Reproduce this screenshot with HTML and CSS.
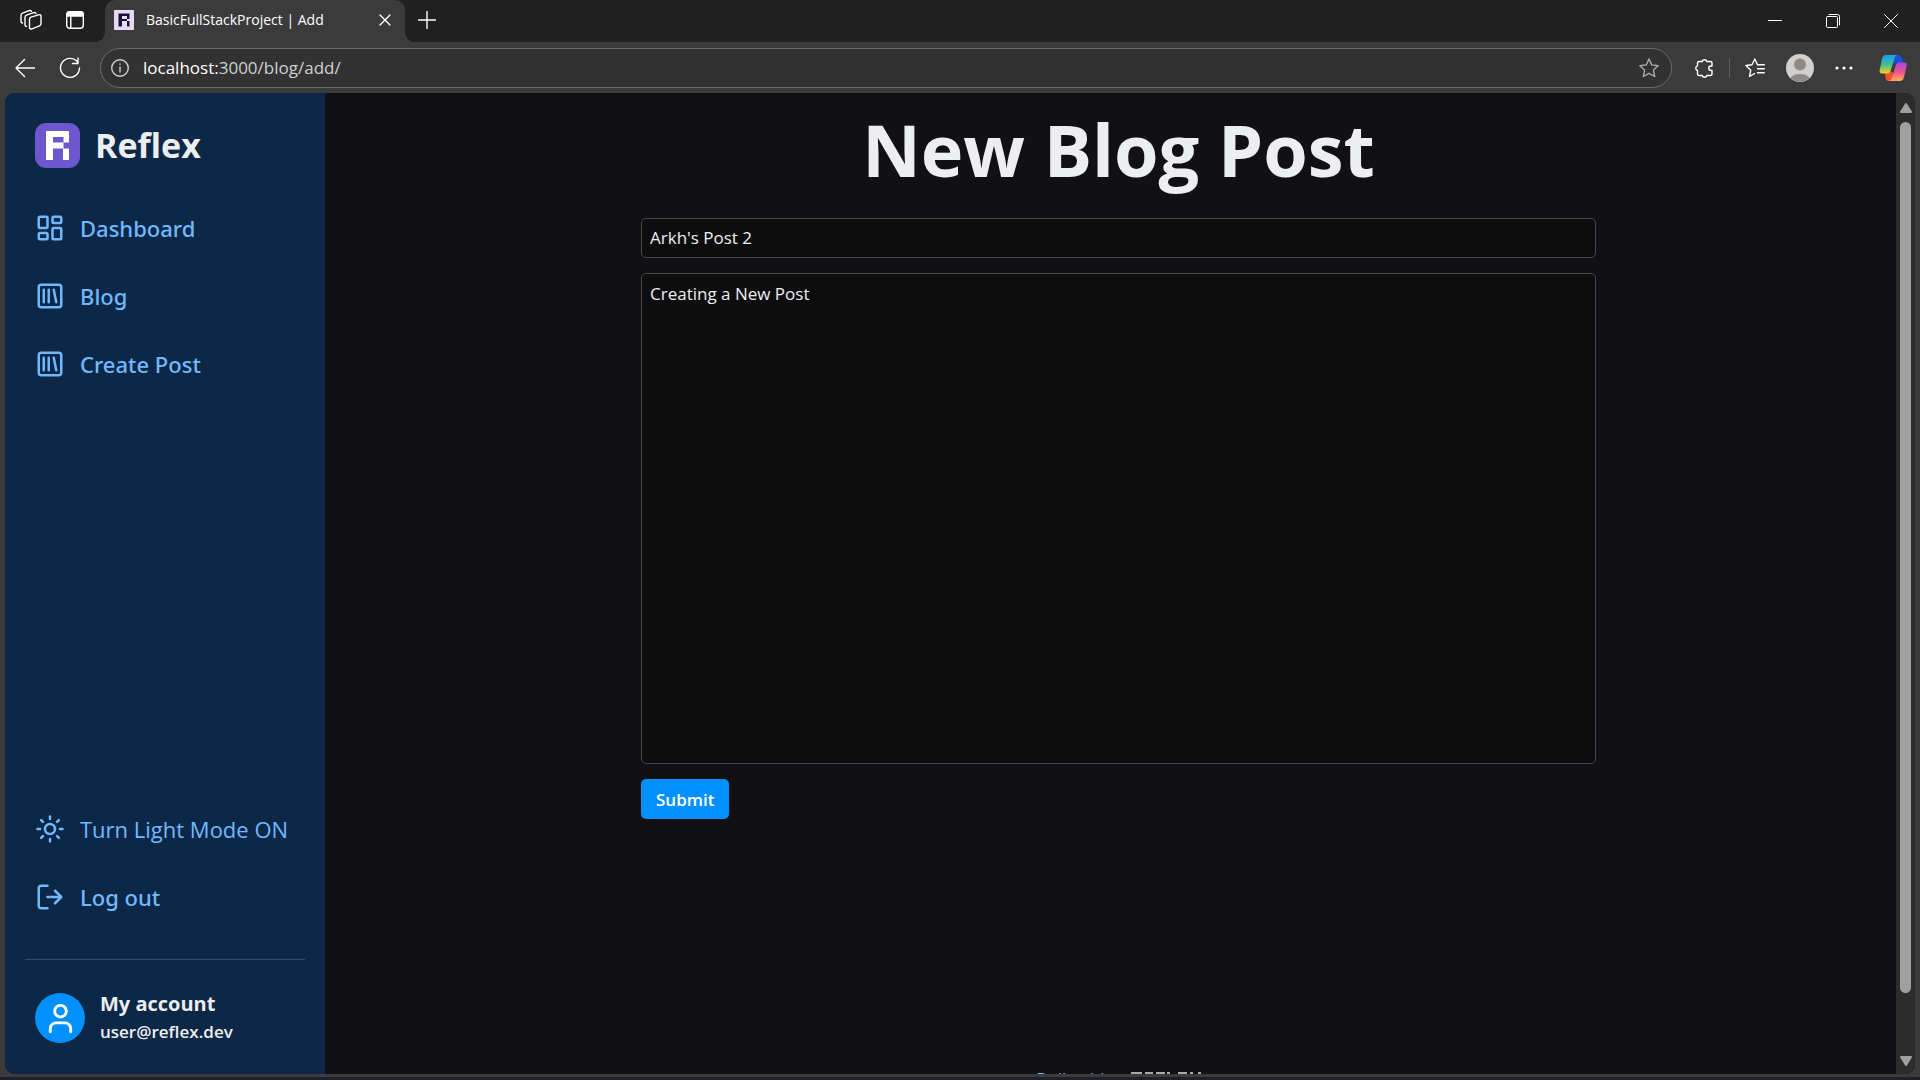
FILE: index.html
```html
<!DOCTYPE html>
<html lang="en">
<head>
<meta charset="utf-8">
<title>BasicFullStackProject | Add</title>
<link rel="stylesheet" href="styles.css">
</head>
<body>
<div class="browser">
  <header class="tabstrip">
    <div class="tab-tools">
      <button class="icon-btn" aria-label="Workspaces"><svg width="22" height="22" viewBox="0 0 22 22" class="line"><path d="M11 8.200 18.500 5.800Q21 5.200 21 7.500V14.500Q21 16.200 19.500 16.800L12 19.800Q9.500 20.500 9.500 18.300V10.200Q9.500 8.700 11 8.200z"/><path d="M6.500 17.500Q5 17.500 5 15.800V8.500Q5 6.700 6.500 6.200L13.500 3.700Q15.500 3.200 16 4.500"/><path d="M2.500 14Q1 14 1 12.300V6.500Q1 4.700 2.500 4.200L9 1.700Q10.800 1.200 11.500 2.300"/></svg></button>
      <button class="icon-btn" aria-label="Tab actions"><svg width="18" height="18" viewBox="0 0 18 18" class="line"><rect x=".7" y=".7" width="16.600" height="16.600" rx="3"/><path d="M.7 5V3.700a3 3 0 0 1 3-3h10.600a3 3 0 0 1 3 3V5z" fill="currentColor"/><path d="M4.800 5v12"/></svg></button>
    </div>
    <div class="tab">
      <svg class="favicon" width="20" height="20" viewBox="0 0 20 20"><path fill="#e4dcf5" d="M0 0h20v20H0z"/><path fill="#1c1433" fill-rule="evenodd" d="M4.500 3.500h11V9H13v2h2.500v5.500H13V11H8v5.500H4.500zM8 6v3h5V6z"/></svg>
      <span class="tab-title">BasicFullStackProject | Add</span>
      <button class="icon-btn" aria-label="Close tab"><svg width="12" height="12" viewBox="0 0 12 12" class="line"><path d="m1 1 10 10M11 1 1 11"/></svg></button>
    </div>
    <button class="icon-btn new-tab" aria-label="New tab"><svg width="18" height="18" viewBox="0 0 18 18" class="line"><path d="M9 .5v17M.5 9h17"/></svg></button>
    <div class="window-controls">
      <button class="icon-btn" aria-label="Minimize"><svg width="14" height="14" viewBox="0 0 14 14" class="line thin"><path d="M.5 6.500h13"/></svg></button>
      <button class="icon-btn" aria-label="Restore"><svg width="14" height="14" viewBox="0 0 14 14" class="line thin"><rect x=".5" y="2.500" width="11" height="11" rx="1"/><path d="M3 .5h8.500a2 2 0 0 1 2 2V11"/></svg></button>
      <button class="icon-btn" aria-label="Close window"><svg width="14" height="14" viewBox="0 0 14 14" class="line thin"><path d="m.5.5 13 13M13.500.5l-13 13"/></svg></button>
    </div>
  </header>
  <div class="toolbar">
    <div class="nav-tools">
      <button class="icon-btn" aria-label="Back"><svg width="20" height="20" viewBox="0 0 20 20" class="line"><path d="M20 10H1M9.500 1.500 1 10l8.500 8.500"/></svg></button>
      <button class="icon-btn" aria-label="Refresh"><svg width="22" height="22" viewBox="0 0 22 22" class="line"><path d="M20.500 11A9.500 9.500 0 1 1 18.500 5M19 1v5.500h-5.500"/></svg></button>
    </div>
    <div class="address">
      <svg width="18" height="18" viewBox="0 0 18 18" class="line"><circle cx="9" cy="9" r="8.300"/><path d="M9 8v5M9 5v.3"/></svg>
      <span class="url"><b>localhost:</b>3000/blog/add/</span>
      <button class="icon-btn star" aria-label="Add to favorites"><svg width="20" height="20" viewBox="0 0 20 20" class="line"><path d="m10 1 2.700 5.900 6.400.8-4.700 4.400 1.300 6.400-5.700-3.200-5.700 3.200 1.300-6.400L.9 7.700l6.400-.8z"/></svg></button>
    </div>
    <div class="actions">
      <button class="icon-btn" aria-label="Extensions"><svg width="20" height="20" viewBox="0 0 20 20" class="line"><path d="M5 3.500H8.200a2.400 2.400 0 0 1 4.600 0H16.500a1.500 1.500 0 0 1 1.500 1.500V8h-1a2.200 2.200 0 0 0 0 4.400h1V16a1.500 1.500 0 0 1-1.500 1.500H12.800a2.400 2.400 0 0 1-4.600 0H5A1.500 1.500 0 0 1 3.500 16V12.500a2.400 2.400 0 0 1 0-4.600V5A1.500 1.500 0 0 1 5 3.500z"/></svg></button>
      <span class="divider"></span>
      <button class="icon-btn" aria-label="Favorites"><svg width="20" height="20" viewBox="0 0 20 20" class="line"><path d="M9.500 15.500 4.500 18.500l1.200-6.200L1 7.500l6-.8L9.800 1l2.700 5.700H19.300M12.500 10.700h6.800M12.500 14.700h6.800"/></svg></button>
      <button class="icon-btn" aria-label="Profile"><svg width="28" height="28" viewBox="0 0 28 28"><circle cx="14" cy="14" r="14" fill="#d2d0ce"/><circle cx="14" cy="10.500" r="6" fill="#8f8b88"/><path fill="#8f8b88" d="M4.500 24a10.500 7 0 0 1 19 0 14 14 0 0 1-19 0z"/></svg></button>
      <button class="icon-btn" aria-label="Settings and more"><svg width="18" height="4" viewBox="0 0 18 4" fill="#fff"><circle cx="2" cy="2" r="1.600"/><circle cx="9" cy="2" r="1.600"/><circle cx="16" cy="2" r="1.600"/></svg></button>
      <button class="icon-btn copilot" aria-label="Copilot"><svg width="28" height="28" viewBox="0 0 28 28"><defs><linearGradient id="cool" x1="0" y1="0" x2="0" y2="1"><stop offset="0" stop-color="#1b9df0"/><stop offset=".5" stop-color="#3bbf9a"/><stop offset="1" stop-color="#f2d313"/></linearGradient><linearGradient id="warm" x1="0" y1="0" x2="0" y2="1"><stop offset="0" stop-color="#a04be0"/><stop offset=".5" stop-color="#ee5090"/><stop offset="1" stop-color="#fbb15a"/></linearGradient></defs><path fill="#1b4fd8" d="M14 1h5q3 0 4 3l1.500 5H19q-2.500 0-3.500 1L13 8z"/><path fill="#f4502c" d="M6 19h3q2 0 3-2l3 3-2 7H9.500q-2.500 0-3-3z"/><path fill="url(#cool)" d="M7 1h12q-2.500 0-3.300 3L11.500 17q-.7 2.500-3 2.500H3q-3 0-2.300-3.500L3 5q1-4 4-4z"/><path fill="url(#warm)" d="M21 27H9.500q2.500 0 3.300-3L16.500 12q.8-3.500 3.500-3.500h5q3.500 0 2.700 3.500L25 23q-1 4-4 4z"/></svg></button>
    </div>
  </div>
  <div class="viewport">
    <aside class="sidebar">
      <a class="brand" href="#"><svg width="45" height="45" viewBox="0 0 45 45"><rect width="45" height="45" rx="11" fill="#6e56cf"/><path fill="#fff" fill-rule="evenodd" d="M11 8h23v11.500h-5.500v6H34V37h-6V25.500H18V37h-7zM18 14v5.500h10.500V14z"/></svg><span>Reflex</span></a>
      <nav class="menu">
        <a href="#"><svg class="icon" viewBox="0 0 24 24"><rect width="7" height="9" x="3" y="3" rx="1"/><rect width="7" height="5" x="14" y="3" rx="1"/><rect width="7" height="9" x="14" y="12" rx="1"/><rect width="7" height="5" x="3" y="16" rx="1"/></svg>Dashboard</a>
        <a href="#"><svg class="icon" viewBox="0 0 24 24"><rect width="18" height="18" x="3" y="3" rx="2"/><path d="M7 7v10M11 7v10m4-10 2 10"/></svg>Blog</a>
        <a href="#"><svg class="icon" viewBox="0 0 24 24"><rect width="18" height="18" x="3" y="3" rx="2"/><path d="M7 7v10M11 7v10m4-10 2 10"/></svg>Create Post</a>
      </nav>
      <div class="menu menu-bottom">
        <button class="mode"><svg class="icon" viewBox="0 0 24 24"><circle cx="12" cy="12" r="4"/><path d="M12 2v2M12 20v2M4.930 4.930l1.410 1.410M17.660 17.660l1.410 1.410M2 12h2M20 12h2M6.340 17.660l-1.410 1.410M19.070 4.930l-1.410 1.410"/></svg>Turn Light Mode ON</button>
        <a href="#"><svg class="icon" viewBox="0 0 24 24"><path d="M10 21H5a2 2 0 0 1-2-2V5a2 2 0 0 1 2-2h5M16 17l5-5-5-5M21 12H10"/></svg>Log out</a>
      </div>
      <hr>
      <div class="account">
        <span class="avatar"><svg viewBox="0 0 24 24" width="35" height="35"><circle cx="12" cy="7" r="4"/><path d="M19 21v-2a4 4 0 0 0-4-4H9a4 4 0 0 0-4 4v2"/></svg></span>
        <div><strong>My account</strong><span class="mail">user@reflex.dev</span></div>
      </div>
    </aside>
    <main class="page">
      <h1>New Blog Post</h1>
      <form class="post-form">
        <input type="text" aria-label="Title" value="Arkh's Post 2">
        <textarea aria-label="Content">Creating a New Post</textarea>
        <button type="button">Submit</button>
      </form>
      <a class="built" href="#">Built with <svg width="70" height="14" viewBox="0 0 70 14" fill="none" stroke="#aaa" stroke-width="3"><path d="M1.500 14V1.500H9.500V7H1.500M9.500 7V14M22 1.500H15.500V12.500H22M15.500 7H22M34 1.500H26.500V14M26.500 7H33M37.500 0V12.500H44M56 1.500H48.500V12.500H56M48.500 7H56M60.500 0V5H68.500V0M60.500 14V9H68.500V14"/></svg></a>
    </main>
    <div class="scrollbar" aria-hidden="true">
      <svg width="12" height="10" viewBox="0 0 12 10"><path d="M6 1 11 9H1z"/></svg>
      <div class="thumb"></div>
      <svg width="12" height="10" viewBox="0 0 12 10"><path d="M6 9 1 1h10z"/></svg>
    </div>
  </div>
</div>
</body>
</html>
```
FILE: styles.css
```css
* { box-sizing: border-box; }
body { margin: 0; font-family: "Open Sans", "Noto Sans", sans-serif; color: #edeef0; background: #20202a; }
button, input, textarea { font: inherit; color: inherit; }
a { color: inherit; text-decoration: none; }
svg { display: block; flex: none; }
.line { fill: none; stroke: currentColor; stroke-width: 1.4; stroke-linecap: round; stroke-linejoin: round; }
.thin { stroke-width: 1; }
.icon-btn { display: grid; place-items: center; padding: 0; border: 0; background: none; color: #fff; }

.browser { height: 100vh; display: flex; flex-direction: column; background: #3b3b3b; border-bottom: 3px solid #20202a; }
.tabstrip { flex: none; height: 42px; display: flex; align-items: center; padding-bottom: 2px; background: #202020; }
.tab-tools { display: flex; align-items: center; gap: 24px; width: 105px; padding-left: 20px; }
.tab { position: relative; align-self: flex-start; width: 300px; height: 42px; display: flex; align-items: center; padding: 0 14px 2px 9px; background: #3b3b3b; border-radius: 10px 10px 0 0; }
.tab::before, .tab::after { content: ""; position: absolute; bottom: 0; width: 10px; height: 10px; }
.tab::before { right: 100%; background: radial-gradient(circle at 0 0, transparent 10px, #3b3b3b 10px); }
.tab::after { left: 100%; background: radial-gradient(circle at 100% 0, transparent 10px, #3b3b3b 10px); }
.tab-title { flex: 1; padding-left: 12px; font-size: 14px; line-height: 20px; color: #fff; white-space: nowrap; }
.new-tab { margin-left: 13px; }
.window-controls { display: flex; gap: 44px; margin-left: auto; padding: 2px 22px 0 0; }

.toolbar { flex: none; height: 51px; display: flex; align-items: center; }
.nav-tools { display: flex; align-items: center; gap: 24px; width: 100px; padding-left: 15px; }
.address { flex: 1; height: 40px; display: flex; align-items: center; padding: 0 12px 0 10px; border: 1px solid #6b6b6b; border-radius: 20px; background: #323232; color: #d0d0d0; }
.url { flex: 1; padding-left: 14px; font-size: 17px; }
.url b { font-weight: 400; color: #fff; }
.star { color: #aaa; }
.actions { display: flex; align-items: center; gap: 21px; padding: 0 13px 0 22px; }
.divider { width: 1px; height: 20px; margin: 0 -6px; background: #606060; }
.copilot { margin-left: 5px; }

.viewport { flex: 1; min-height: 0; display: flex; margin: 0 5px 3px; border-radius: 10px; overflow: hidden; background: #111113; }
.sidebar { flex: none; width: 320px; display: flex; flex-direction: column; padding: 30px 20px 28px; background: #0d2847; color: #70b8ff; }
.brand { display: flex; align-items: center; gap: 15px; padding-left: 10px; height: 45px; font-size: 34px; line-height: 45px; font-weight: 700; color: #edeef0; }
.menu { display: flex; flex-direction: column; padding: 26px 10px 0; }
.menu a, .mode { display: flex; align-items: center; gap: 15px; height: 68px; padding: 0; border: 0; background: none; font-size: 22px; line-height: 30px; }
.menu a { font-family: "Noto Sans", "Open Sans", sans-serif; font-weight: 500; }
.mode { color: inherit; white-space: nowrap; }
.icon { width: 30px; height: 30px; fill: none; stroke: currentColor; stroke-width: 2; stroke-linecap: round; stroke-linejoin: round; }
.menu-bottom { margin-top: auto; padding-top: 0; }
hr { width: 100%; margin: 28px 0 30px; border: 0; border-top: 1px solid #2f4b6e; }
.account { display: flex; align-items: center; gap: 15px; padding-left: 10px; color: #edeef0; }
.avatar { display: grid; place-items: center; width: 50px; height: 50px; border-radius: 50%; background: #0090ff; }
.avatar svg { fill: none; stroke: #fff; stroke-width: 2; stroke-linecap: round; }
.account strong, .mail { display: block; }
.account strong { font-size: 20px; line-height: 28px; }
.mail { font-size: 17px; line-height: 28px; font-weight: 600; }

.page { flex: 1; min-width: 0; display: flex; flex-direction: column; align-items: center; padding: 11px 0 0 16px; overflow: hidden; }
h1 { flex: none; margin: 0; font-size: 72px; line-height: 90px; font-weight: 700; }
.post-form { flex: none; width: calc(50vw - 5px); display: flex; flex-direction: column; align-items: flex-start; gap: 15px; padding-top: 24px; }
.post-form input, .post-form textarea { width: 100%; padding: 0 8px 2px; border: 1px solid #43484e; border-radius: 5px; background: #0d0d0e; font-size: 17px; outline: 0; }
.post-form input { height: 40px; }
.post-form textarea { height: calc(50vh - 49px); padding-top: 7px; line-height: 25px; resize: none; }
.post-form button { height: 40px; padding: 0 15px; border: 0; border-radius: 5px; background: #0090ff; color: #fff; font-size: 17px; font-weight: 600; }
.built { flex: none; display: flex; gap: 20px; align-items: center; margin-top: auto; margin-bottom: -17px; font-size: 17px; line-height: 25px; color: #70b8ff; }

.scrollbar { flex: none; width: 19px; display: flex; flex-direction: column; align-items: center; padding: 10px 0 8px; background: #2c2c2c; }
.scrollbar svg { fill: #9f9f9f; stroke: #9f9f9f; stroke-linejoin: round; stroke-width: 2; }
.thumb { flex: 1; width: 11px; margin: 9px 0 63px; border-radius: 6px; background: #9f9f9f; }
```
